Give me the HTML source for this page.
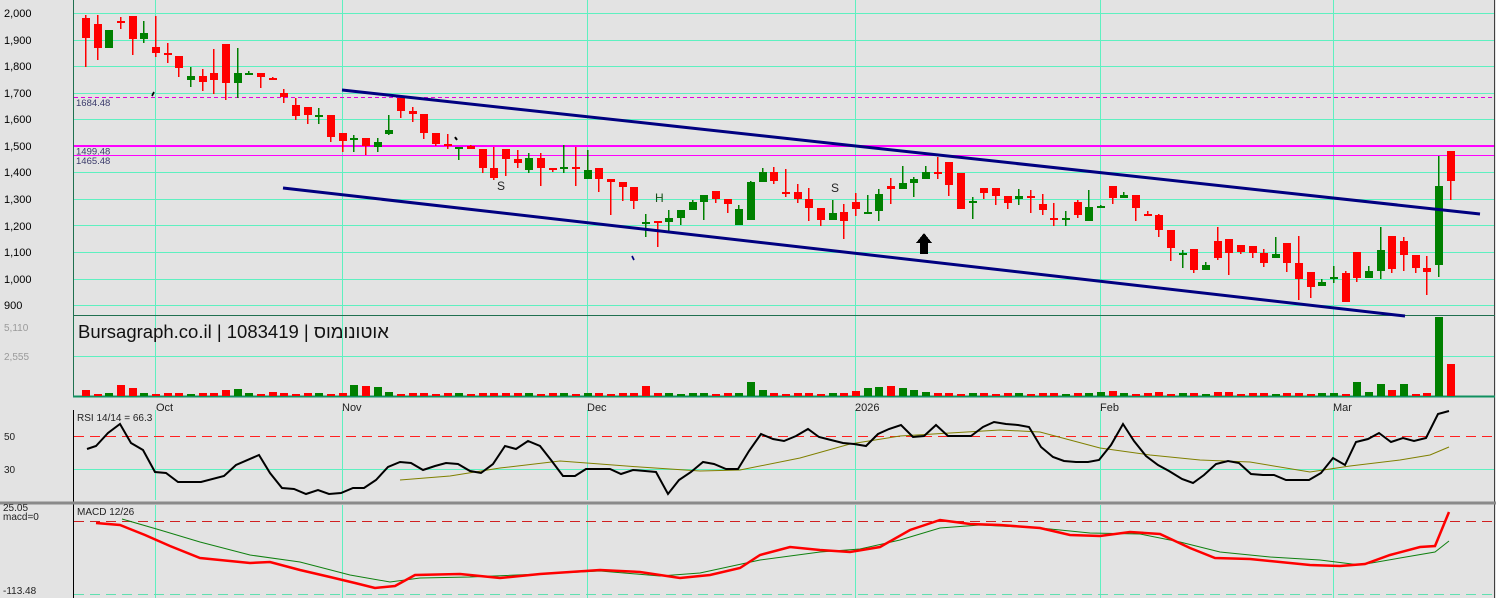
<!DOCTYPE html>
<html><head><meta charset="utf-8">
<style>
html,body{margin:0;padding:0;background:#e3e3e3;}
svg{display:block;}
text{font-family:"Liberation Sans","Noto Sans CJK SC",sans-serif;}
</style></head>
<body>
<svg id="c" width="1496" height="598" xmlns="http://www.w3.org/2000/svg" shape-rendering="crispEdges">
<rect x="0" y="0" width="1496" height="598" fill="#e3e3e3"/>
<g id="grid"></g>
<line x1="74" y1="97.5" x2="1494" y2="97.5" stroke="#e000e0" stroke-width="1" stroke-dasharray="4,3"/>
<line x1="74" y1="146" x2="1494" y2="146" stroke="#ff00ff" stroke-width="2"/>
<line x1="74" y1="155.5" x2="1494" y2="155.5" stroke="#ff00ff" stroke-width="1"/>
<text x="76" y="106" font-size="9.5" fill="#3a3a6a">1684.48</text>
<text x="76" y="154.5" font-size="9.5" fill="#3a3a6a">1499.48</text>
<text x="76" y="164" font-size="9.5" fill="#3a3a6a">1465.48</text>
<line x1="73.5" y1="0" x2="73.5" y2="397" stroke="#207050" stroke-width="1"/>
<line x1="73.5" y1="410" x2="73.5" y2="598" stroke="#000" stroke-width="1"/>
<line x1="1494.5" y1="0" x2="1494.5" y2="598" stroke="#404040" stroke-width="1"/>
<line x1="73" y1="315.5" x2="1495" y2="315.5" stroke="#207050" stroke-width="1"/>
<line x1="73" y1="396.5" x2="1495" y2="396.5" stroke="#109060" stroke-width="2"/>
<line x1="0" y1="503" x2="1496" y2="503" stroke="#8a8a8a" stroke-width="3"/>
<g id="cand"></g>
<line x1="342" y1="90" x2="1480" y2="214" stroke="#000080" stroke-width="3" shape-rendering="auto"/>
<line x1="283" y1="188" x2="1405" y2="316" stroke="#000080" stroke-width="3" shape-rendering="auto"/>
<g id="vol"></g>
<g font-size="11" fill="#000">
<text x="4" y="17">2,000</text><text x="4" y="44">1,900</text><text x="4" y="70">1,800</text>
<text x="4" y="97">1,700</text><text x="4" y="123">1,600</text><text x="4" y="150">1,500</text>
<text x="4" y="176">1,400</text><text x="4" y="203">1,300</text><text x="4" y="230">1,200</text>
<text x="4" y="256">1,100</text><text x="4" y="283">1,000</text><text x="4" y="309">900</text>
</g>
<text x="4" y="331" font-size="10" fill="#9a9a9a">5,110</text>
<text x="4" y="360" font-size="10" fill="#9a9a9a">2,555</text>
<text x="78" y="338" font-size="18.5" fill="#111">Bursagraph.co.il | 1083419 | אוטונומוס</text>
<g font-size="11" fill="#222">
<text x="156" y="411">Oct</text><text x="342" y="411">Nov</text><text x="587" y="411">Dec</text>
<text x="855" y="411">2026</text><text x="1100" y="411">Feb</text><text x="1333" y="411">Mar</text>
</g>
<text x="497" y="190" font-size="12" fill="#222">S</text>
<text x="655" y="202" font-size="12" fill="#185018">H</text>
<text x="831" y="192" font-size="12" fill="#222">S</text>
<polygon points="924,233 932,243 928,243 928,254 920,254 920,243 916,243" fill="#000"/>
<path d="M152,96 l2,-4" stroke="#000" stroke-width="2"/>
<path d="M455,137 l2,3" stroke="#000" stroke-width="2"/>
<path d="M632,256 l2,4" stroke="#000080" stroke-width="2"/>
<text x="77" y="421" font-size="10" fill="#222">RSI 14/14 = 66.3</text>
<text x="4" y="440" font-size="10" fill="#222">50</text>
<text x="4" y="473" font-size="10" fill="#222">30</text>
<line x1="74" y1="436.5" x2="1494" y2="436.5" stroke="#ff2020" stroke-width="1" stroke-dasharray="10,6"/>
<polyline id="rsis" fill="none" stroke="#808000" stroke-width="1" shape-rendering="auto"/>
<polyline id="rsi" fill="none" stroke="#000" stroke-width="2" shape-rendering="auto"/>
<text x="77" y="515" font-size="10" fill="#222">MACD 12/26</text>
<text x="3" y="511" font-size="10" fill="#222">25.05</text>
<text x="3" y="520" font-size="10" fill="#222">macd=0</text>
<text x="3" y="594" font-size="10" fill="#222">-113.48</text>
<line x1="74" y1="521.5" x2="1494" y2="521.5" stroke="#d02020" stroke-width="1" stroke-dasharray="10,6"/>
<line x1="74" y1="594.5" x2="1494" y2="594.5" stroke="#60e0b0" stroke-width="1" stroke-dasharray="10,6"/>
<polyline id="ms" fill="none" stroke="#108010" stroke-width="1" shape-rendering="auto"/>
<polyline id="m" fill="none" stroke="#ff0000" stroke-width="2.5" shape-rendering="auto"/>
</svg>
<script>
var NS="http://www.w3.org/2000/svg";
function el(p,t,a){var e=document.createElementNS(NS,t);for(var k in a)e.setAttribute(k,a[k]);p.appendChild(e);return e;}
var G=document.getElementById('grid'),gc="#5ef0c0";
for(var k=0;k<12;k++){var y=Math.round(13+k*26.55)+0.5;el(G,'line',{x1:74,y1:y,x2:1494,y2:y,stroke:gc});}
el(G,'line',{x1:74,y1:356.5,x2:1494,y2:356.5,stroke:gc});
el(G,'line',{x1:74,y1:469.5,x2:1494,y2:469.5,stroke:gc});
[155,342,587,855,1100,1333].forEach(function(x){
 el(G,'line',{x1:x+.5,y1:0,x2:x+.5,y2:397,stroke:gc});
 el(G,'line',{x1:x+.5,y1:410,x2:x+.5,y2:500,stroke:gc});
 el(G,'line',{x1:x+.5,y1:505,x2:x+.5,y2:598,stroke:gc});
});
var D="r 18 38 15 67|r 24 48 15 60|g 30 48 30 48|r 21 21 17 29|r 16 39 16 55|g 33 39 21 43|r 47 53 16 57|r 53 53 43 63|r 56 68 56 77|g 76 80 67 87|r 76 82 69 91|r 73 80 49 94|r 44 83 44 100|g 73 83 48 98|g 73 73 71 75|r 73 77 73 88|r 78 78 77 79|r 93 97 89 103|r 105 116 98 120|r 107 115 107 124|g 115 115 108 124|r 115 137 115 142|r 133 141 133 152|g 138 138 135 152|r 138 146 138 155|g 142 147 138 152|g 130 134 115 135|r 98 111 95 118|r 111 114 107 122|r 114 133 114 139|r 133 144 133 146|r 144 144 134 149|g 147 147 147 160|r 146 149 145 149|r 149 168 149 173|r 168 178 147 180|r 149 159 149 176|r 159 163 150 168|g 158 170 153 173|r 158 168 153 186|r 168 168 168 172|g 167 167 145 173|r 167 167 147 186|g 170 179 150 179|r 168 179 168 192|r 179 182 179 215|r 182 187 182 201|r 187 201 187 209|g 222 222 214 237|r 221 221 221 247|g 218 222 210 232|g 210 218 210 225|g 202 210 200 210|g 195 202 195 220|r 191 199 191 203|r 199 204 199 213|g 209 225 205 225|g 182 220 181 220|g 172 182 168 182|r 172 181 167 184|r 192 192 169 197|r 192 199 184 203|r 199 208 188 221|r 208 220 208 226|g 213 220 200 220|r 212 221 204 239|r 202 209 193 216|g 212 212 195 213|g 194 211 189 221|r 186 189 178 204|g 183 189 166 189|g 179 183 177 197|g 172 179 166 179|r 172 172 157 179|r 162 185 162 196|r 173 209 173 209|g 201 201 197 219|r 188 193 188 199|r 188 196 188 205|r 196 203 196 209|g 196 199 189 205|r 196 196 190 213|r 204 210 194 215|r 218 218 203 226|g 218 218 211 226|r 202 215 200 218|g 207 221 190 221|g 206 206 205 207|r 186 198 186 204|g 195 198 192 198|r 195 208 195 221|r 214 214 211 216|r 215 230 214 237|r 230 248 230 261|g 253 253 250 268|r 249 270 249 273|g 265 270 262 270|r 241 258 227 260|r 239 253 239 275|r 245 252 245 254|r 246 253 246 258|r 253 263 249 267|g 254 258 237 258|r 243 263 243 272|r 263 279 236 300|r 272 287 272 298|g 282 286 279 286|g 277 277 266 283|r 273 302 271 302|r 252 278 252 282|g 271 278 266 278|g 250 271 227 279|r 236 269 236 273|r 241 255 237 271|r 255 268 255 273|r 268 272 256 295|g 186 265 156 277|r 151 181 151 200".split('|');
var C=document.getElementById('cand'),V=document.getElementById('vol');
var vol={0:6,1:2,3:11,4:8,12:6,13:7,16:4,23:11,24:10,25:9,26:4,36:3,48:10,57:14,58:6,66:5,67:8,68:9,69:10,70:8,71:6,72:4,87:4,88:5,92:4,97:4,98:4,108:2,109:14,110:4,111:12,112:6,113:12,116:79,117:32};
D.forEach(function(s,i){
 var a=s.split(' '),col=a[0]=='g'?'#008000':'#ff0000';
 var t=+a[1],b=+a[2],wt=+a[3],wb=+a[4];
 var x=Math.round(85+i*11.665);
 if(wb>wt)el(C,'rect',{x:x,y:wt,width:1.5,height:wb-wt,fill:col});
 if(b-t<2)el(C,'rect',{x:x-3,y:t,width:8,height:2,fill:col});
 else el(C,'rect',{x:x-3,y:t,width:8,height:b-t,fill:col});
 var h=vol[i]!==undefined?vol[i]:(i%3==0?2:3);
 var vc=col; if(i==109||i==113)vc='#008000'; if(i==48)vc='#ff0000';
 el(V,'rect',{x:x-3,y:396-h,width:8,height:h,fill:vc});
});
function pl(id,s){document.getElementById(id).setAttribute('points',s);}
pl('rsi',"87,449 96,446 108,433 120,424 131,443 143,450 155,472 166,473 178,482 201,482 224,476 236,465 259,455 270,473 282,488 294,489 306,494 318,490 329,494 341,493 353,488 364,488 376,480 388,467 400,462 411,463 423,470 435,466 446,463 458,464 470,471 481,473 493,464 505,446 516,449 528,441 540,446 551,460 563,476 575,476 586,469 598,469 610,469 621,474 633,470 645,471 656,472 668,494 679,480 691,472 703,462 714,464 726,469 738,469 749,451 761,434 773,439 784,441 796,436 808,429 819,437 831,440 843,443 854,444 866,446 878,434 889,429 901,425 913,437 924,436 936,425 948,436 959,436 971,436 983,427 994,422 1006,424 1018,425 1029,427 1041,447 1053,457 1064,461 1076,462 1088,462 1099,460 1111,445 1123,424 1134,441 1146,456 1158,465 1169,471 1182,479 1193,483 1204,475 1216,464 1228,461 1239,463 1251,474 1263,475 1274,475 1286,480 1298,480 1309,480 1321,473 1333,458 1345,465 1356,442 1368,439 1379,433 1391,442 1403,438 1414,441 1426,438 1438,414 1449,411");
pl('rsis',"400,480 450,476 500,468 560,461 600,464 640,467 700,471 740,470 800,458 850,444 900,436 1000,430 1040,432 1070,440 1100,448 1150,455 1200,460 1250,462 1310,472 1350,466 1400,460 1430,455 1449,447");
pl('m',"96,523 120,525 145,535 170,546 200,558 250,563 270,562 300,570 330,577 355,583 375,588 395,586 415,575 460,574 500,578 540,574 600,570 640,572 680,578 710,575 740,568 760,555 790,547 820,550 850,552 880,547 910,530 940,520 970,524 1000,525 1040,528 1070,535 1100,536 1130,532 1160,534 1190,548 1215,558 1250,559 1280,562 1310,565 1340,566 1365,564 1390,555 1420,547 1435,546 1449,512");
pl('ms',"122,519 160,530 200,542 250,555 300,562 350,575 390,582 420,578 470,577 540,574 600,571 660,576 700,573 760,560 820,552 860,549 900,540 940,528 980,525 1040,528 1090,533 1140,534 1180,542 1220,552 1270,557 1320,560 1360,565 1400,558 1435,552 1449,541");
</script>
</body></html>
